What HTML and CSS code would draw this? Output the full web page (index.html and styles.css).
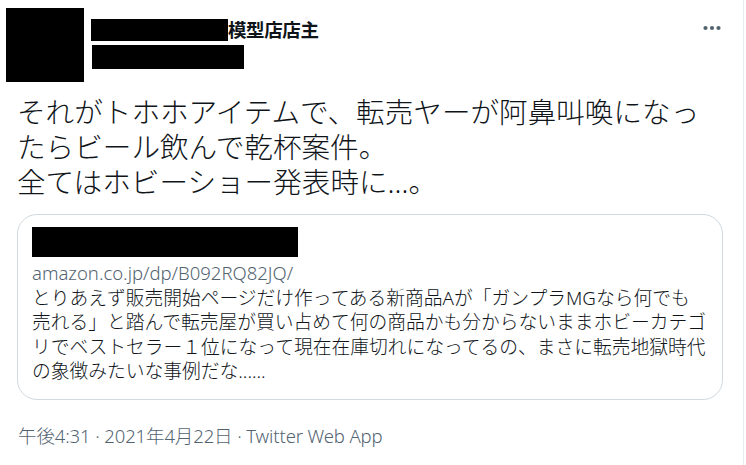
FILE: index.html
```html
<!DOCTYPE html>
<html lang="ja">
<head>
<meta charset="utf-8">
<link rel="stylesheet" href="styles.css">
</head>
<body>
<article class="tweet">
  <header class="head">
    <div class="avatar"></div>
    <div class="who">
      <div class="name-row"><span class="redact redact-name"></span><span class="name">模型店店主</span></div>
      <span class="redact redact-handle"></span>
    </div>
    <button class="more" aria-label="その他">
      <svg width="18" height="6" viewBox="0 0 18 6"><circle cx="2.5" cy="3" r="2.1"/><circle cx="9" cy="3" r="2.1"/><circle cx="15.5" cy="3" r="2.1"/></svg>
    </button>
  </header>
  <p class="text">それがトホホアイテムで、転売ヤーが阿鼻叫喚になったらビール飲んで乾杯案件。<br>全てはホビーショー発表時に…。</p>
  <a class="card">
    <span class="redact redact-title"></span>
    <span class="card-url">amazon.co.jp/dp/B092RQ82JQ/</span>
    <span class="card-desc">とりあえず販売開始ページだけ作ってある新商品Aが「ガンプラMGなら何でも<br>売れる」と踏んで転売屋が買い占めて何の商品かも分からないままホビーカテゴリでベストセラー１位になって現在在庫切れになってるの、まさに転売地獄時代の象徴みたいな事例だな......</span>
  </a>
  <div class="meta">午後4:31 · 2021年4月22日 · Twitter Web App</div>
</article>
</body>
</html>
```

FILE: styles.css
```css
* { box-sizing: border-box; }
html, body { margin: 0; padding: 0; background: #fff; }
body {
  font-family: "Noto Sans", "Noto Sans CJK JP", sans-serif;
  color: #0f1419;
}
.tweet {
  width: 744px;
  height: 465px;
  border-right: 1px solid #e6ecf0;
  overflow: hidden;
}
.head {
  display: flex;
  align-items: flex-start;
  padding: 8px 22px 0 6px;
}
.avatar {
  width: 78px;
  height: 74px;
  background: #000;
  flex: none;
}
.redact { display: block; background: #000; }
.who {
  margin: 11px 0 0 7px;
  display: flex;
  flex-direction: column;
}
.name-row { display: flex; align-items: center; }
.redact-name { width: 137px; height: 22px; }
.name {
  font-weight: 700;
  font-size: 18.5px;
  line-height: 22px;
  letter-spacing: -0.4px;
}
.redact-handle { width: 152px; height: 24px; margin: 4px 0 0 1px; }
.more {
  margin: 17px 0 0 auto;
  border: 0;
  padding: 0;
  background: none;
  line-height: 0;
  fill: #536471;
}
.text {
  margin: 12px 0 0 17px;
  width: 706px;
  font-size: 28.6px;
  line-height: 35px;
  font-weight: 300;
}
.card {
  display: flex;
  flex-direction: column;
  margin: 15px 0 0 17px;
  width: 706px;
  height: 186px;
  border: 1px solid #cfd9de;
  border-radius: 20px;
  padding: 12px 14px 0 14px;
}
.redact-title { width: 266px; height: 30px; margin-bottom: 4px; }
.card-url {
  font-size: 18.5px;
  line-height: 24.5px;
  color: #536471;
  font-weight: 300;
}
.card-desc {
  font-size: 18.75px;
  line-height: 24.5px;
  color: #0f1419;
  font-weight: 300;
}
.meta {
  margin: 23px 0 0 18px;
  font-size: 18.5px;
  line-height: 25px;
  letter-spacing: -0.12px;
  color: #536471;
  font-weight: 300;
}
```
